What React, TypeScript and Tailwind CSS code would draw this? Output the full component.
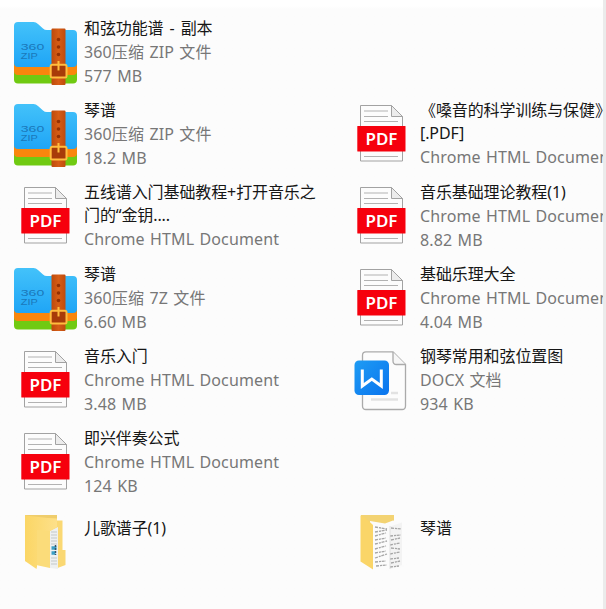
import { clsx } from "clsx";

type Kind = "zip" | "pdf" | "docx" | "folder" | "folderDocs";

interface FileItem {
  kind: Kind;
  title: string[];
  type?: string;
  size?: string;
}

const ROWS: (FileItem | null)[][] = [
  [{ kind: "zip", title: ["和弦功能谱 - 副本"], type: "360压缩 ZIP 文件", size: "577 MB" }, null],
  [
    { kind: "zip", title: ["琴谱"], type: "360压缩 ZIP 文件", size: "18.2 MB" },
    { kind: "pdf", title: ["《嗓音的科学训练与保健》", "[.PDF]"], type: "Chrome HTML Document" },
  ],
  [
    { kind: "pdf", title: ["五线谱入门基础教程+打开音乐之", "门的“金钥...."], type: "Chrome HTML Document" },
    { kind: "pdf", title: ["音乐基础理论教程(1)"], type: "Chrome HTML Document", size: "8.82 MB" },
  ],
  [
    { kind: "zip", title: ["琴谱"], type: "360压缩 7Z 文件", size: "6.60 MB" },
    { kind: "pdf", title: ["基础乐理大全"], type: "Chrome HTML Document", size: "4.04 MB" },
  ],
  [
    { kind: "pdf", title: ["音乐入门"], type: "Chrome HTML Document", size: "3.48 MB" },
    { kind: "docx", title: ["钢琴常用和弦位置图"], type: "DOCX 文档", size: "934 KB" },
  ],
  [{ kind: "pdf", title: ["即兴伴奏公式"], type: "Chrome HTML Document", size: "124 KB" }, null],
  [
    { kind: "folder", title: ["儿歌谱子(1)"] },
    { kind: "folderDocs", title: ["琴谱"] },
  ],
];

/* ── Icons, all drawn in a 72×82 cell ── */
function ZipIcon() {
  return (
    <svg viewBox="0 0 72 82" className="h-[82px] w-[72px] shrink-0">
      <defs>
        <linearGradient id="zipBlue" x1="0" y1="0" x2="0" y2="1">
          <stop offset="0" stopColor="#43c2fa" />
          <stop offset="1" stopColor="#1fa5f6" />
        </linearGradient>
        <linearGradient id="zipStrap" x1="0" y1="0" x2="1" y2="0">
          <stop offset="0" stopColor="#bd4a0c" />
          <stop offset="0.5" stopColor="#d65d16" />
          <stop offset="1" stopColor="#bf4b0d" />
        </linearGradient>
      </defs>
      <rect x="2" y="46" width="63" height="26.500" rx="4" fill="#70ca12" />
      <path d="M2 46h63v14q0 4-4 4H6q-4 0-4-4z" fill="#f9860d" />
      <path d="M2 15q0-4 4-4h15.500q2.500 0 4.500 2l5 4.500q1.500 1.500 4 1.500h26q4 0 4 4v29q0 4-4 4H6q-4 0-4-4z" fill="url(#zipBlue)" />
      <text x="8.800" y="39" fontSize="9.500" textLength="23.500" lengthAdjust="spacingAndGlyphs" fill="#1b78ba" fontFamily="Liberation Sans, sans-serif">360</text>
      <text x="8.800" y="48.200" fontSize="9.500" textLength="17" lengthAdjust="spacingAndGlyphs" fill="#1b78ba" fontFamily="Liberation Sans, sans-serif">ZIP</text>
      <rect x="39.500" y="17.500" width="14" height="56.500" rx="1" fill="url(#zipStrap)" />
      <g fill="#943003">
        <circle cx="46.500" cy="28.500" r="1.800" />
        <circle cx="46.500" cy="36" r="1.800" />
        <circle cx="46.500" cy="43.500" r="1.800" />
      </g>
      <rect x="38.700" y="53.700" width="15.800" height="12.800" rx="1.500" fill="#a83b09" stroke="#ffbd3e" strokeWidth="2" />
      <path d="M46.500 50v9.500" stroke="#ffbd3e" strokeWidth="2" />
    </svg>
  );
}

function PdfIcon() {
  return (
    <svg viewBox="0 0 72 82" className="h-[82px] w-[72px] shrink-0">
      <path d="M12.500 12.500h31l11 11v44.500h-42z" fill="#fcfcfc" stroke="#a2a2a2" />
      <path d="M43.500 12.500v11h11z" fill="#ececec" stroke="#a2a2a2" />
      <path d="M16 18h24M16 23.500h24M16 28.500h34M16 63.500h34" stroke="#b2b2b2" strokeWidth="1.100" />
      <rect x="9.300" y="33" width="48.200" height="25.500" rx="0.500" fill="#f6000d" />
      <text x="17.500" y="52" fontSize="16" fontWeight="600" textLength="32" lengthAdjust="spacingAndGlyphs" fill="#ffffff" fontFamily="Noto Sans, sans-serif">PDF</text>
    </svg>
  );
}

function DocxIcon() {
  return (
    <svg viewBox="-4 0 72 82" className="h-[82px] w-[72px] shrink-0">
      <defs>
        <linearGradient id="wBlue" x1="0" y1="0" x2="1" y2="1">
          <stop offset="0" stopColor="#1e9cf4" />
          <stop offset="1" stopColor="#0a74ee" />
        </linearGradient>
      </defs>
      <path d="M14 12.800h27L53.500 25.500V67q0 3.500-3.500 3.500H14q-3.500 0-3.500-3.500V16.300q0-3.500 3.500-3.500z" fill="#fcfcfc" stroke="#aaaaaa" strokeWidth="1.300" />
      <path d="M41 13v9q0 3.500 3.500 3.500h9" fill="#f7f7f7" stroke="#aaaaaa" strokeWidth="1.300" />
      <path d="M39 54h7M19 60.500h27" stroke="#e2e2e2" strokeWidth="2.500" />
      <rect x="2.500" y="21.500" width="34.500" height="34.500" rx="4.500" fill="url(#wBlue)" />
      <path d="M10.300 30.500v16.500l9.500-7 9.500 7V30.500" fill="none" stroke="#ffffff" strokeWidth="3" />
    </svg>
  );
}

function FolderIcon({ docs }: { docs?: boolean }) {
  return (
    <svg viewBox="0 0 72 82" className="h-[82px] w-[72px] shrink-0">
      <defs>
        <linearGradient id="folderFlap" x1="0" y1="0" x2="1" y2="0">
          <stop offset="0" stopColor="#fbd665" />
          <stop offset="1" stopColor="#fde08a" />
        </linearGradient>
      </defs>
      {docs ? (
        <>
          <path d="M13 12h33v10H13z" fill="#f3d373" />
          <path d="M22 18l15 2.500 8-3 9 2V62l2 1.500-15 4-17-2z" fill="#fbfbfb" />
          <path d="M42 23.500l12-4V62l-12 4z" fill="#f3f3f3" />
          <path
            d="M27 24l12 2m-12 3l12-2m4-2l10 1M27 33l11-3m4 3l11-1M27 37l11-2m5 2l9-2M27 41l12-3m3 4l10-2M27 46l11-3m5 2l9 1M27 50l11-2m4 3l10-2M27 55l12-4m3 5l9-1M27 59l11-1m5 2l9-2M28 63l11-1m3 2l9-1"
            stroke="#a6a6a6"
            strokeWidth="1.300"
            strokeDasharray="3 1 2 .7"
          />
          <path d="M42 23v43" stroke="#dadada" strokeWidth=".8" />
          <path d="M12.500 12.500l5 2.500 7.500 7v44.500l-12.500-8z" fill="#fad568" />
        </>
      ) : (
        <>
          <path d="M13 12h32v5.500h5.500V47h3v15l-8 3L13 58z" fill="#fad873" />
          <path d="M13 12h32v3H18z" fill="#efcd6c" />
          <path d="M38 28l8-4v42l-8-1z" fill="#eef0f0" />
          <path d="M39 29h6m-6 3h6m-6 3h6m-6 3h6m-6 3h6m-6 14h6m-6 3h6m-6 3h6" stroke="#c3c8ca" />
          <path d="M39.500 45h5m-5 5h4" stroke="#3a9fc6" strokeWidth="3.500" />
          <path d="M43.500 42v10" stroke="#345469" strokeWidth="1.500" strokeDasharray="2 1" />
          <path d="M24 22l14-1.500v44.500l-14-3z" fill="#fbdc7a" />
          <path d="M13 12.500l32 3.500v8l-7 4-13-1v36.500l-.5 2.500L13 58z" fill="url(#folderFlap)" />
        </>
      )}
    </svg>
  );
}

function Icon({ kind }: { kind: Kind }) {
  if (kind === "zip") return <ZipIcon />;
  if (kind === "pdf") return <PdfIcon />;
  if (kind === "docx") return <DocxIcon />;
  return <FolderIcon docs={kind === "folderDocs"} />;
}

/* ── One tile ── */
function FileTile({ item }: { item: FileItem }) {
  const isFolder = !item.type;
  const isTall = item.title.length > 1;
  return (
    <div className="flex h-[82px] w-[336px] shrink-0">
      <Icon kind={item.kind} />
      <div
        className={clsx(
          "whitespace-nowrap text-base leading-6 tracking-[0.13px] [word-spacing:1px] text-[#777777]",
          isFolder ? "pt-[13px]" : isTall ? "pt-1.5" : "pt-[5px]"
        )}
      >
        <div className={clsx("tracking-[-0.1px] [word-spacing:2px] text-[#161616]", isTall && "leading-[23px]")}>
          {item.title.map((line) => (
            <div key={line}>{line}</div>
          ))}
        </div>
        {item.type && <div>{item.type}</div>}
        {item.size && <div>{item.size}</div>}
      </div>
    </div>
  );
}

export default function App() {
  return (
    <div className="flex h-[609px] w-[606px] overflow-hidden bg-linear-to-b from-white from-[6px] to-[#fcfcfc] to-[9px] font-['Noto_Sans','Noto_Sans_CJK_SC',sans-serif]">
      <div className="w-[603px] overflow-hidden pt-[11px] pl-3">
        {ROWS.map((row, idx) => (
          <div key={idx} className="flex">
            {row.map((item, col) =>
              item ? <FileTile key={col} item={item} /> : <div key={col} className="w-[336px] shrink-0" />
            )}
          </div>
        ))}
      </div>
      <div className="w-[3px] bg-[#ebebeb]" />
    </div>
  );
}
